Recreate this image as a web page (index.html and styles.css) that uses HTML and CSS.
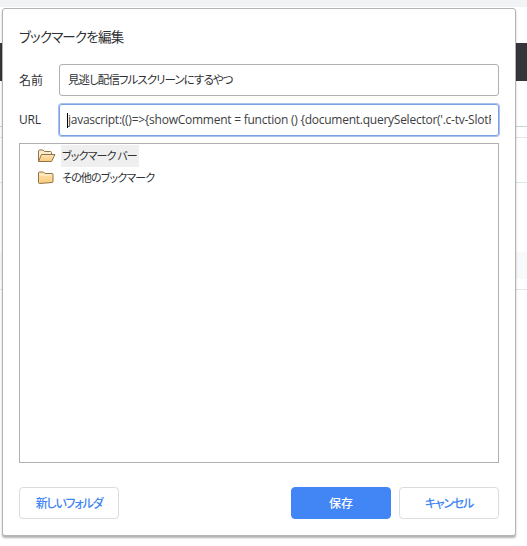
FILE: index.html
```html
<!DOCTYPE html>
<html>
<head>
  <title>ブックマークを編集</title>
  <meta charset="UTF-8">
  <link rel="stylesheet" href="styles.css">
</head>
<body>

<div class="topbar"></div>
<div class="darkbar"></div>
<div class="line line1"></div>
<div class="line line2"></div>
<div class="line line3"></div>
<div class="band"></div>
<div class="line line4"></div>

<div class="dialog">
  <div class="title">ブックマークを編集</div>

  <div class="row">
    <label class="label">名前</label>
    <div class="field"><span class="field-text">見逃し配信フルスクリーンにするやつ</span></div>
  </div>
  <div class="row">
    <label class="label url-label">URL</label>
    <div class="field focused"><span class="caret"></span><span class="field-text">javascript:(()=&gt;{showComment = function () {document.querySelector('.c-tv-SlotPage</span></div>
  </div>

  <div class="tree">
    <div class="node">
      <svg class="folder" width="19" height="14" viewBox="0 0 19 14">
        <defs>
          <linearGradient id="folderFill" x1="0" y1="0" x2="0" y2="1">
            <stop offset="0" stop-color="#fde6b8"/>
            <stop offset="1" stop-color="#fbc977"/>
          </linearGradient>
        </defs>
        <path d="M0.500 12.500V2q0-1 1-1h3.500l1.500 1.500h6q1 0 1 1v1.500" fill="#fbeccb" stroke="#8f7448"/>
        <path d="M0.500 12.500l3-7h13.500l-3.500 7z" fill="url(#folderFill)" stroke="#8f7448" stroke-linejoin="round"/>
      </svg>
      <span class="node-name selected">ブックマーク&nbsp;バー</span>
    </div>
    <div class="node">
      <svg class="folder" width="19" height="14" viewBox="0 0 19 14">
        <path d="M1.500 12.500q-1 0-1-1V2q0-1 1-1h4l1.500 1.500h7q1 0 1 1v7q0 1-1 1z" fill="url(#folderFill)" stroke="#8f7448"/>
        <path d="M1.500 4h12" stroke="#fef2d9"/>
      </svg>
      <span class="node-name">その他のブックマーク</span>
    </div>
  </div>

  <div class="buttons">
    <button class="button tight">新しいフォルダ</button>
    <div class="right-buttons">
      <button class="button primary">保存</button>
      <button class="button tight">キャンセル</button>
    </div>
  </div>
</div>

</body>
</html>
```

FILE: styles.css
```css
html, body {
    margin: 0;
    height: 546px;
    overflow: hidden;
}
body {
    background-color: white;
    color: #303134;
    font-family: "Noto Sans CJK JP", "Open Sans", sans-serif;
    font-size: 12px;
    font-feature-settings: "palt";
    position: relative;
}
.topbar {
    height: 7px;
    background-color: #f1f3f4;
}
.darkbar {
    position: absolute;
    left: 0;
    top: 43px;
    width: 527px;
    height: 38px;
    background-color: #35363a;
}
.line {
    position: absolute;
    left: 0;
    width: 527px;
    height: 1px;
    background-color: #e3e5e8;
}
.line1 { top: 126px; background-color: #c5d8d8; }
.line2 { top: 137px; }
.line3 { top: 182px; background-color: #d8e4e8; }
.line4 { top: 289px; }
.band {
    position: absolute;
    left: 0;
    top: 252px;
    width: 527px;
    height: 27px;
    background-color: #f8f9fa;
}
.dialog {
    position: absolute;
    left: 2px;
    top: 8px;
    width: 480px;
    height: 526px;
    background-color: white;
    border: 1px solid #b4b4b4;
    border-radius: 3px;
    box-shadow: 0 2px 2px rgba(0, 0, 0, 0.3);
    padding: 0 16px;
    display: flex;
    flex-direction: column;
}
.title {
    font-size: 13.500px;
    letter-spacing: -0.8px;
    line-height: 20px;
    margin-top: 17px;
    margin-bottom: 18px;
}
.row {
    display: flex;
    align-items: center;
    margin-bottom: 8px;
}
.label {
    width: 40px;
    font-size: 12px;
    line-height: 16px;
}
.url-label {
    font-family: "Open Sans", sans-serif;
    letter-spacing: -0.2px;
}
.field {
    flex: 1;
    min-width: 0;
    display: flex;
    align-items: center;
    height: 30px;
    padding: 0 7px 0 8px;
    border: 1px solid #b0b0b0;
    border-radius: 3px;
    font-size: 11.500px;
    letter-spacing: -0.95px;
}
.field-text {
    display: block;
    flex: 1;
    min-width: 0;
    line-height: 26px;
    margin-top: -2px;
    white-space: nowrap;
    overflow: hidden;
}
.focused {
    border: 1px solid #7b9fe0;
    box-shadow: 0 0 0 1px #a9c2f0;
    font-family: "Open Sans", sans-serif;
    font-size: 12px;
    color: #3c4043;
    letter-spacing: -0.25px;
    padding-left: 7px;
}
.focused .field-text {
    margin-top: 0;
}
.caret {
    flex: none;
    width: 1px;
    height: 15px;
    background-color: black;
}
.tree {
    height: 317px;
    border: 1px solid #b0b0b0;
    margin-top: -1px;
    padding-top: 1px;
}
.node {
    display: flex;
    align-items: center;
    height: 22px;
    padding-left: 18px;
}
.folder {
    flex: none;
    margin-right: 4px;
}
.node-name {
    height: 22px;
    line-height: 20px;
    padding: 0 2px 0 1px;
    font-size: 11px;
    letter-spacing: -0.85px;
}
.selected {
    background-color: #efefef;
}
.buttons {
    display: flex;
    justify-content: space-between;
    margin-top: 24px;
}
.right-buttons {
    display: flex;
    gap: 8px;
}
.button {
    width: 100px;
    height: 32px;
    padding: 0 0 2px;
    font-family: inherit;
    font-feature-settings: inherit;
    font-size: 12px;
    font-weight: 500;
    background-color: white;
    color: #4285f4;
    border: 1px solid #dadce0;
    border-radius: 4px;
}
.tight {
    letter-spacing: -1.200px;
}
.primary {
    background-color: #4285f4;
    border-color: #4285f4;
    color: white;
}
```
